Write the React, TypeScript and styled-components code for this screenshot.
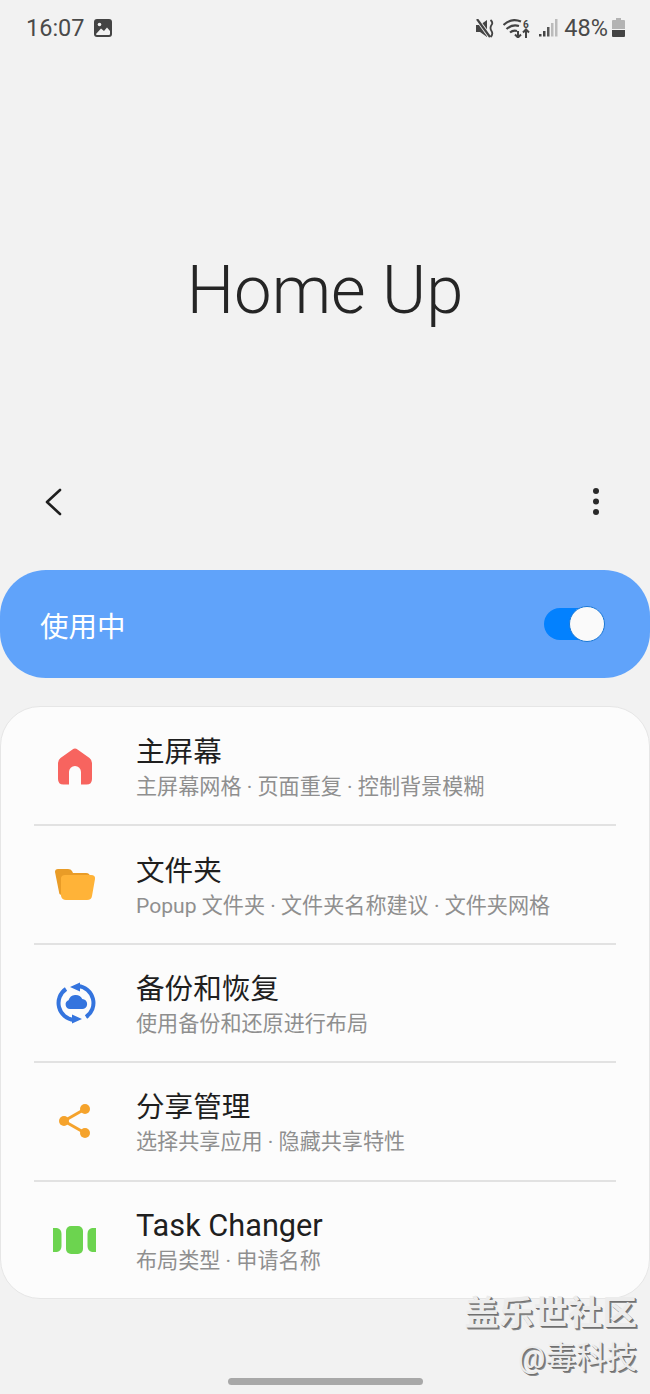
import styled, { createGlobalStyle } from "styled-components";
import type { ReactNode } from "react";

const GlobalStyle = createGlobalStyle`
    html, body {
        margin: 0;
        padding: 0;
        background-color: #f2f2f2;
    }
    * {
        box-sizing: border-box;
    }
`;

const Phone = styled.div`
    position: relative;
    width: 650px;
    height: 1394px;
    overflow: hidden;
    display: flex;
    flex-direction: column;
    background-color: #f2f2f2;
    font-family: Roboto, "Noto Sans CJK SC", sans-serif;
`;

const StatusBar = styled.div`
    height: 56px;
    padding: 0 25px 0 26px;
    display: flex;
    align-items: center;
    justify-content: space-between;
    color: #4a4a4a;
`;

const StatusGroup = styled.div`
    display: flex;
    align-items: center;
`;

const Clock = styled.span`
    font-size: 23.5px;
    margin-right: 9px;
`;

const BatteryText = styled.span`
    font-size: 23.5px;
    margin: 0 4px 0 6px;
`;

const Hero = styled.div`
    height: 414px;
    padding-top: 53px;
    display: flex;
    align-items: center;
    justify-content: center;
`;

const Title = styled.h1`
    margin: 0;
    font-size: 67px;
    font-weight: 300;
    color: #252525;
`;

const NavBar = styled.div`
    height: 64px;
    padding: 0 46px 0 43px;
    display: flex;
    align-items: center;
    justify-content: space-between;
`;

const Banner = styled.div`
    margin-top: 36px;
    height: 108px;
    padding: 0 46px 0 40px;
    border-radius: 46px;
    background-color: #60a3fa;
    display: flex;
    align-items: center;
    justify-content: space-between;
    color: #fff;
    font-size: 28.5px;
`;

const Track = styled.div`
    position: relative;
    width: 60px;
    height: 32px;
    border-radius: 16px;
    background-color: #0381fe;
`;

const Knob = styled.div`
    position: absolute;
    right: -1px;
    top: -2px;
    width: 36px;
    height: 36px;
    border-radius: 50%;
    background-color: #fafafa;
    border: 1.5px solid #1a78d6;
`;

const Card = styled.div`
    margin-top: 28px;
    height: 593px;
    padding: 1px 33px 0;
    border-radius: 40px;
    border: 1px solid #e6e6e6;
    background-color: #fcfcfc;
    display: flex;
    flex-direction: column;
`;

const Row = styled.div<{ $last?: boolean }>`
    flex: 1;
    display: flex;
    align-items: center;
    border-bottom: ${(p) => (p.$last ? "none" : "2px solid #e2e2e2")};
`;

const IconSlot = styled.div`
    width: 102px;
    padding-left: 23px;
    display: flex;
    align-items: center;
    flex-shrink: 0;
`;

const RowText = styled.div`
    padding-top: 2px;
    display: flex;
    flex-direction: column;
    gap: 1px;
`;

const RowTitle = styled.div<{ $latin?: boolean }>`
    font-size: ${(p) => (p.$latin ? "30.7px" : "28.6px")};
    line-height: 38px;
    color: #1f1f1f;
`;

const RowSub = styled.div`
    font-size: 21.1px;
    line-height: 29px;
    color: #8f8f8f;
`;

const HomeBar = styled.div`
    margin: 79px auto 0;
    width: 195px;
    height: 7px;
    border-radius: 4px;
    background-color: #a8a8a8;
`;

const Watermark = styled.div`
    position: absolute;
    right: 13px;
    top: 1292px;
    text-align: right;
    color: #ececec;
    text-shadow: 1px 1px 0 #6f6f6f, 2px 2px 0 #8a8a8a;
`;

const WatermarkMain = styled.div`
    font-size: 34.5px;
    line-height: 42px;
    font-weight: 700;
`;

const WatermarkSub = styled.div`
    font-size: 30.5px;
    line-height: 40px;
    margin-top: 4px;
`;

const HomeIcon = () => (
    <svg width="36" height="37" viewBox="0 0 36 37">
        <path
            fill="#f7645f"
            d="M15.500 1.500 Q18 -0.500 20.500 1.500 L32.500 10 Q35 12 35 15 V31 Q35 36.500 29.500 36.500 H24 V24 A6 6 0 0 0 12 24 V36.500 H6.500 Q1 36.500 1 31 V15 Q1 12 3.500 10 Z"
        />
    </svg>
);

const FolderIcon = () => (
    <svg width="42" height="32" viewBox="0 0 42 32" style={{ marginLeft: -3 }}>
        <path fill="#e99c27" d="M1 3 Q1 0 4 0 H14 Q17 0 18 2 L19 4 H32 Q36 4 36 8 V26 H8 Q5 26 5 23 Z" />
        <path fill="#ffb338" d="M7 9 Q7.500 6 11 6 H37 Q41.500 6 41 10 L38 27 Q37.500 31 33 31 H12 Q8 31 7 27 Z" />
    </svg>
);

const SyncIcon = () => (
    <svg width="40" height="42" viewBox="0 0 40 42" style={{ marginLeft: -1 }}>
        <g fill="none" stroke="#3474de" strokeWidth="4">
            <path d="M22 4 A17 17 0 0 1 30 35" />
            <path d="M18 38 A17 17 0 0 1 10 7" />
        </g>
        <path fill="#3474de" d="M14 5 L24 0.500 V9.500 Z M26 37 L16 41.500 V32.500 Z" />
        <path
            fill="#3474de"
            d="M14 27 A4.500 4.500 0 0 1 12.500 18.300 A7.500 7.500 0 0 1 26.300 17 A5 5 0 0 1 26 27 Z"
        />
    </svg>
);

const ShareIcon = () => (
    <svg width="34" height="36" viewBox="0 0 34 36" style={{ marginLeft: 1 }}>
        <g stroke="#f5a32c" strokeWidth="3">
            <line x1="6" y1="18" x2="27" y2="6" />
            <line x1="6" y1="18" x2="27" y2="30" />
        </g>
        <g fill="#f5a32c">
            <circle cx="6" cy="18" r="5" />
            <circle cx="27" cy="6" r="5" />
            <circle cx="27" cy="30" r="5" />
        </g>
    </svg>
);

const TaskIcon = () => (
    <svg width="44" height="28" viewBox="0 0 44 28" style={{ marginLeft: -4 }}>
        <g fill="#6cd44f">
            <path d="M0 2 H4 Q8.500 3 8.500 8 V20 Q8.500 25 4 26 H0 Z" />
            <rect x="13" y="0" width="17" height="28" rx="5" />
            <path d="M43 2 H39 Q34.500 3 34.500 8 V20 Q34.500 25 39 26 H43 Z" />
        </g>
    </svg>
);

const BackIcon = () => (
    <svg width="20" height="30" viewBox="0 0 20 30">
        <path d="M17 3 L4 15 L17 27" fill="none" stroke="#1f1f1f" strokeWidth="2.600" strokeLinecap="round" strokeLinejoin="round" />
    </svg>
);

const MoreIcon = () => (
    <svg width="16" height="30" viewBox="0 0 16 30">
        <g fill="#2a2a2a">
            <circle cx="8" cy="4" r="3" />
            <circle cx="8" cy="14.500" r="3" />
            <circle cx="8" cy="25" r="3" />
        </g>
    </svg>
);

const GalleryIcon = () => (
    <svg width="18" height="18" viewBox="0 0 18 18">
        <rect width="18" height="18" rx="3" fill="#444" />
        <circle cx="5.500" cy="5.500" r="1.800" fill="#f2f2f2" />
        <path d="M2 15 L7 9.500 L10 12 L13 8.500 L16 12 V15 Q16 16 15 16 H3 Q2 16 2 15 Z" fill="#f2f2f2" />
    </svg>
);

const MuteIcon = () => (
    <svg width="18" height="19" viewBox="0 0 18 19">
        <path d="M0 6 H4 L11 1 V18 L4 13 H0 Z" fill="#444" />
        <path d="M1 0 L14 18" stroke="#f2f2f2" strokeWidth="4" />
        <path d="M1 0 L14 18" stroke="#444" strokeWidth="2.200" />
        <path d="M14.500 1 Q17.500 3.500 15.500 6 Q13.500 9 15.500 12 Q17.500 15 14.500 18" fill="none" stroke="#444" strokeWidth="1.800" />
    </svg>
);

const WifiIcon = () => (
    <svg width="27" height="19" viewBox="0 0 27 19" style={{ marginLeft: 9 }}>
        <g fill="none" stroke="#444" strokeWidth="2.200">
            <path d="M0.500 6 Q8 -1.500 18 2.500" />
            <path d="M3.500 10 Q9 5 16 7" />
            <path d="M7 13.500 Q10 11 14 12" />
        </g>
        <text x="20" y="8.500" fontSize="10" fontWeight="700" fill="#444" fontFamily="Roboto, sans-serif">6</text>
        <path d="M15 12 V18 M12 15.500 L15 18.500 L18 15.500" fill="none" stroke="#444" strokeWidth="2" />
        <path d="M23 19 V11 M20 13.500 L23 10.500 L26 13.500" fill="none" stroke="#444" strokeWidth="2" />
    </svg>
);

const SignalIcon = () => (
    <svg width="19" height="18" viewBox="0 0 19 18" style={{ marginLeft: 9 }}>
        <rect x="0" y="15" width="2.500" height="2.500" fill="#444" />
        <rect x="4" y="12" width="2.500" height="5.500" fill="#444" />
        <rect x="8" y="8" width="2.500" height="9.500" fill="#555" />
        <rect x="12" y="4" width="2.500" height="13.500" fill="#bbb" />
        <rect x="16" y="0" width="2.500" height="17.500" fill="#bbb" />
    </svg>
);

const BatteryIcon = () => (
    <svg width="13" height="20" viewBox="0 0 13 20">
        <path d="M4 0 H9 V2 H12 Q13 2 13 3 V11 H0 V3 Q0 2 1 2 H4 Z" fill="#b3b3b3" />
        <path d="M0 12 H13 V18 Q13 19 12 19 H1 Q0 19 0 18 Z" fill="#444" />
    </svg>
);

type MenuItem = { icon: ReactNode; title: string; sub: string; latin?: boolean };

const items: MenuItem[] = [
    { icon: <HomeIcon />, title: "主屏幕", sub: "主屏幕网格 · 页面重复 · 控制背景模糊" },
    { icon: <FolderIcon />, title: "文件夹", sub: "Popup 文件夹 · 文件夹名称建议 · 文件夹网格" },
    { icon: <SyncIcon />, title: "备份和恢复", sub: "使用备份和还原进行布局" },
    { icon: <ShareIcon />, title: "分享管理", sub: "选择共享应用 · 隐藏共享特性" },
    { icon: <TaskIcon />, title: "Task Changer", sub: "布局类型 · 申请名称", latin: true },
];

export default function App() {
    return (
        <Phone>
            <GlobalStyle />
            <StatusBar>
                <StatusGroup>
                    <Clock>16:07</Clock>
                    <GalleryIcon />
                </StatusGroup>
                <StatusGroup>
                    <MuteIcon />
                    <WifiIcon />
                    <SignalIcon />
                    <BatteryText>48%</BatteryText>
                    <BatteryIcon />
                </StatusGroup>
            </StatusBar>
            <Hero>
                <Title>Home Up</Title>
            </Hero>
            <NavBar>
                <BackIcon />
                <MoreIcon />
            </NavBar>
            <Banner>
                <span>使用中</span>
                <Track>
                    <Knob />
                </Track>
            </Banner>
            <Card>
                {items.map((item, i) => (
                    <Row key={item.title} $last={i === items.length - 1}>
                        <IconSlot>{item.icon}</IconSlot>
                        <RowText>
                            <RowTitle $latin={item.latin}>{item.title}</RowTitle>
                            <RowSub>{item.sub}</RowSub>
                        </RowText>
                    </Row>
                ))}
            </Card>
            <HomeBar />
            <Watermark>
                <WatermarkMain>盖乐世社区</WatermarkMain>
                <WatermarkSub>@毒科技</WatermarkSub>
            </Watermark>
        </Phone>
    );
}
